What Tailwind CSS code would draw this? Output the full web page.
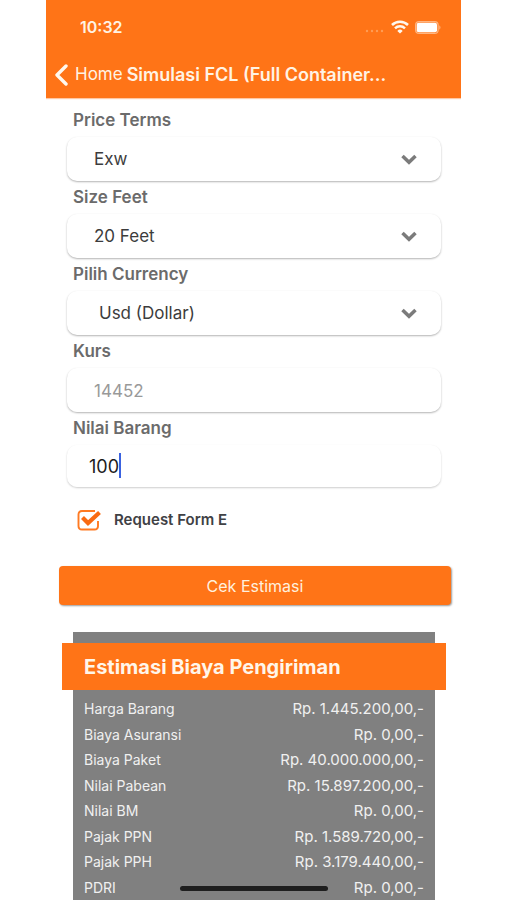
<!DOCTYPE html>
<html lang="id">
<head>
<meta charset="utf-8">
<meta name="viewport" content="width=device-width, initial-scale=1">
<title>Simulasi FCL</title>
<script src="https://cdn.jsdelivr.net/npm/@tailwindcss/browser@4"></script>
</head>
<body class="bg-white font-[Inter,sans-serif]">
<div class="relative mx-[46px] flex h-screen flex-col overflow-hidden">
  <header class="shrink-0 bg-[#ff7417] text-[#fff3e4] shadow-[0_1px_1px_rgba(255,116,23,0.4)]">
    <div class="flex h-[54px] items-center justify-between pr-5 pl-[34px]">
      <time class="text-base font-semibold">10:32</time>
      <div class="flex items-center gap-[6px]">
        <svg class="mt-2 h-1 w-5" viewBox="0 0 20 4" fill="#ff9c55" aria-hidden="true"><circle cx="2" cy="2" r="1.200"/><circle cx="7" cy="2" r="1.200"/><circle cx="12" cy="2" r="1.200"/><circle cx="17" cy="2" r="1.200"/></svg>
        <svg class="h-[14px] w-[18px]" viewBox="0 0 18 14" fill="none" stroke="#fff8ee" aria-hidden="true"><path d="M1 5a11.5 11.5 0 0 1 16 0" stroke-width="2.600"/><path d="M4 8.400a7 7 0 0 1 10 0" stroke-width="2.400"/><path d="M9 13.600 6.300 10.900a3.800 3.800 0 0 1 5.400 0z" fill="#fff8ee" stroke="none"/></svg>
        <svg class="h-[13px] w-[26px]" viewBox="0 0 26 13" fill="none" aria-hidden="true"><rect x="0.600" y="0.600" width="22.500" height="11.800" rx="3.500" stroke="#ffb581" stroke-width="1.200"/><rect x="1.700" y="1.700" width="20.300" height="9.600" rx="2" fill="#fff"/><path d="M24.300 4.300v4.400c1.600-.8 1.600-3.600 0-4.400z" fill="#ffb581"/></svg>
      </div>
    </div>
    <div class="flex h-[44px] items-center pb-[2px] pl-2">
      <a href="#" class="flex items-center gap-[7px] text-[17px]">
        <svg class="h-6 w-[14px]" viewBox="0 0 14 24" fill="none" stroke="#fff8ee" stroke-width="3.400" stroke-linecap="round" stroke-linejoin="round" aria-hidden="true"><path d="M12 3 3 12 12 21"/></svg>
        Home
      </a>
      <h1 class="ml-1 text-lg font-semibold whitespace-nowrap">Simulasi FCL (Full Container...</h1>
    </div>
  </header>

  <main class="min-h-0 flex-1 overflow-hidden">
    <form class="pt-[6px]">
      <div class="mr-5 ml-[21px]">
        <label for="terms" class="block h-[33px] pl-[6px] text-[17px] leading-[32px] font-semibold text-[#6b6b6b]">Price Terms</label>
        <div class="relative">
          <select id="terms" class="h-[44px] w-full appearance-none rounded-[10px] bg-white px-[27px] pt-[2px] text-[17px] text-[#3c3c3c] shadow-[0_1px_2px_rgba(0,0,0,0.3)]"><option>Exw</option></select>
          <svg class="pointer-events-none absolute top-[17px] right-6 h-[11px] w-4" viewBox="0 0 16 11" fill="none" stroke="#7b7b7b" stroke-width="3.500" aria-hidden="true"><path d="M1.500 2 8 8.300 14.500 2"/></svg>
        </div>

        <label for="size" class="block h-[33px] pl-[6px] text-[17px] leading-[32px] font-semibold text-[#6b6b6b]">Size Feet</label>
        <div class="relative">
          <select id="size" class="h-[44px] w-full appearance-none rounded-[10px] bg-white px-[27px] pt-[2px] text-[17px] text-[#3c3c3c] shadow-[0_1px_2px_rgba(0,0,0,0.3)]"><option>20 Feet</option></select>
          <svg class="pointer-events-none absolute top-[17px] right-6 h-[11px] w-4" viewBox="0 0 16 11" fill="none" stroke="#7b7b7b" stroke-width="3.500" aria-hidden="true"><path d="M1.500 2 8 8.300 14.500 2"/></svg>
        </div>

        <label for="currency" class="block h-[33px] pl-[6px] text-[17px] leading-[32px] font-semibold text-[#6b6b6b]">Pilih Currency</label>
        <div class="relative">
          <select id="currency" class="h-[44px] w-full appearance-none rounded-[10px] bg-white px-8 pt-[2px] text-[17px] text-[#3c3c3c] shadow-[0_1px_2px_rgba(0,0,0,0.3)]"><option>Usd (Dollar)</option></select>
          <svg class="pointer-events-none absolute top-[17px] right-6 h-[11px] w-4" viewBox="0 0 16 11" fill="none" stroke="#7b7b7b" stroke-width="3.500" aria-hidden="true"><path d="M1.500 2 8 8.300 14.500 2"/></svg>
        </div>

        <label for="kurs" class="block h-[33px] pl-[6px] text-[17px] leading-[32px] font-semibold text-[#6b6b6b]">Kurs</label>
        <input id="kurs" type="text" value="14452" readonly class="block h-[44px] w-full rounded-[10px] bg-white px-[27px] pt-[2px] text-[17px] text-[#999] shadow-[0_1px_2px_rgba(0,0,0,0.3)]">

        <label for="nilai" class="block h-[33px] pl-[6px] text-[17px] leading-[32px] font-semibold text-[#6b6b6b]">Nilai Barang</label>
        <div class="relative">
          <input id="nilai" type="text" inputmode="numeric" value="100" class="block h-[42px] w-full rounded-[10px] bg-white px-[22px] text-lg text-[#1c1c1c] caret-transparent shadow-[0_1px_2px_rgba(0,0,0,0.2)] outline-none">
          <span class="absolute top-2 left-[52px] h-[25px] w-[2px] bg-[#3a62e0]"></span>
        </div>
      </div>

      <label class="mt-5 ml-[31px] flex h-[26px] w-fit items-center text-[15px] font-semibold text-[#3f4145]">
        <span class="relative mr-3 h-[22px] w-[25px]">
          <input type="checkbox" checked class="absolute inset-0 appearance-none">
          <svg class="pointer-events-none h-[22px] w-[25px]" viewBox="0 0 25 22" fill="none" aria-hidden="true"><path d="M18 2H5Q1.500 2 1.500 5.500V17Q1.500 20.500 5 20.500H17.500Q21 20.500 21 17V12" stroke="#ff7a22" stroke-width="1.900"/><path d="M5.500 8.500 11 14 22.500 3.500" stroke="#f96a12" stroke-width="4.200"/></svg>
        </span>
        Request Form E
      </label>

      <div class="mt-[33px] mr-[10px] ml-[13px]">
        <button type="button" class="block h-[39px] w-full rounded-[4px] bg-[#ff7417] text-base font-normal text-[#fff0de] shadow-[1px_1px_2px_rgba(0,0,0,0.4)]">Cek Estimasi</button>
      </div>
    </form>

    <section class="mt-[27px] mr-[26px] ml-[27px] bg-[#808080] pt-[11px] text-[#f0f0f0]">
      <h2 class="-mx-[11px] flex h-[47px] items-center bg-[#ff7417] pl-[22px] text-xl font-bold text-[#fff6ea]">Estimasi Biaya Pengiriman</h2>
      <table class="mt-[6px] w-full text-sm">
        <tbody>
          <tr class="h-[26px]"><th scope="row" class="p-0 pl-[11px] text-left font-normal">Harga Barang</th><td class="p-0 pr-[11px] text-right text-[15px]">Rp. 1.445.200,00,-</td></tr>
          <tr class="h-[25px]"><th scope="row" class="p-0 pl-[11px] text-left font-normal">Biaya Asuransi</th><td class="p-0 pr-[11px] text-right text-[15px]">Rp. 0,00,-</td></tr>
          <tr class="h-[26px]"><th scope="row" class="p-0 pl-[11px] text-left font-normal">Biaya Paket</th><td class="p-0 pr-[11px] text-right text-[15px]">Rp. 40.000.000,00,-</td></tr>
          <tr class="h-[25px]"><th scope="row" class="p-0 pl-[11px] text-left font-normal">Nilai Pabean</th><td class="p-0 pr-[11px] text-right text-[15px]">Rp. 15.897.200,00,-</td></tr>
          <tr class="h-[26px]"><th scope="row" class="p-0 pl-[11px] text-left font-normal">Nilai BM</th><td class="p-0 pr-[11px] text-right text-[15px]">Rp. 0,00,-</td></tr>
          <tr class="h-[25px]"><th scope="row" class="p-0 pl-[11px] text-left font-normal">Pajak PPN</th><td class="p-0 pr-[11px] text-right text-[15px]">Rp. 1.589.720,00,-</td></tr>
          <tr class="h-[26px]"><th scope="row" class="p-0 pl-[11px] text-left font-normal">Pajak PPH</th><td class="p-0 pr-[11px] text-right text-[15px]">Rp. 3.179.440,00,-</td></tr>
          <tr class="h-[26px]"><th scope="row" class="p-0 pl-[11px] text-left font-normal">PDRI</th><td class="p-0 pr-[11px] text-right text-[15px]">Rp. 0,00,-</td></tr>
        </tbody>
      </table>
    </section>
  </main>
  <div class="absolute bottom-[9px] left-1/2 h-[5px] w-[148px] -translate-x-1/2 rounded-full bg-[#1e1e1e]"></div>
</div>
</body>
</html>
